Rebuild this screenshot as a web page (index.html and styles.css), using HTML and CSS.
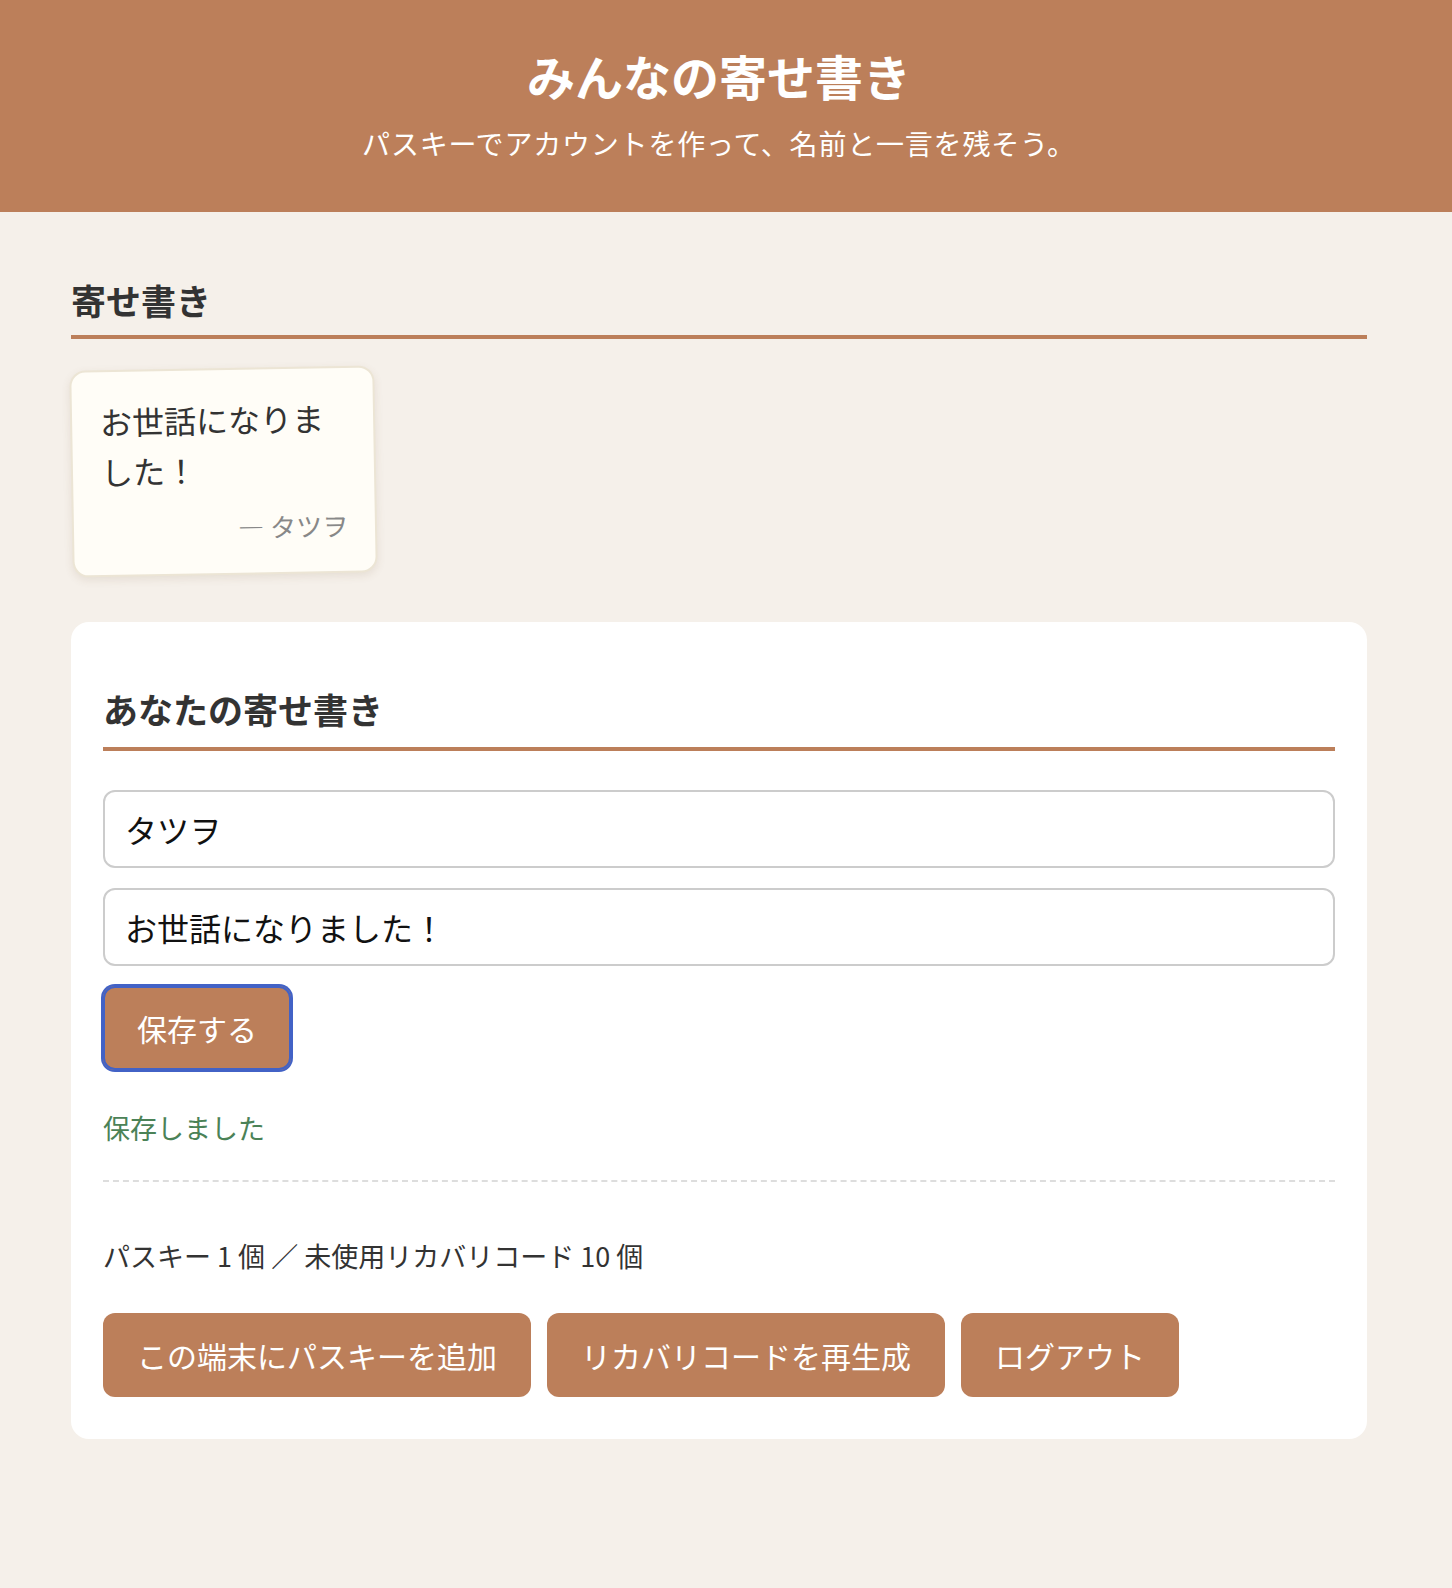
FILE: index.html
```html
<!DOCTYPE html>
<html lang="ja">
<head>
    <meta charset="UTF-8">
    <meta name="viewport" content="width=device-width, initial-scale=1.0">
    <title>みんなの寄せ書き</title>
    <link rel="stylesheet" href="styles.css">
</head>
<body>
    <header class="site-header">
        <h1>みんなの寄せ書き</h1>
        <p>パスキーでアカウントを作って、名前と一言を残そう。</p>
    </header>

    <main class="container">
        <section>
            <h2>寄せ書き</h2>
            <div class="cards">
                <div class="card">
                    <p class="card-msg">お世話になりました！</p>
                    <p class="card-author">— タツヲ</p>
                </div>
            </div>
        </section>

        <section class="panel">
            <h2>あなたの寄せ書き</h2>
            <form class="entry-form" onsubmit="return false;">
                <input type="text" value="タツヲ">
                <input type="text" value="お世話になりました！">
                <button class="btn is-focused" type="submit">保存する</button>
            </form>
            <p class="status-ok">保存しました</p>

            <div class="account">
                <p class="account-info">パスキー 1 個 ／ 未使用リカバリコード 10 個</p>
                <div class="actions">
                    <button class="btn">この端末にパスキーを追加</button>
                    <button class="btn">リカバリコードを再生成</button>
                    <button class="btn">ログアウト</button>
                </div>
            </div>
        </section>
    </main>
</body>
</html>
```

FILE: styles.css
```css
body {
    margin: 0;
    background-color: #f5f0ea;
    color: #333;
    font-family: "Noto Sans CJK JP", "Noto Sans", sans-serif;
}

.site-header {
    background-color: #bc7f5a;
    color: #fff;
    text-align: center;
    padding: 47px 14px 48px 0;
}
.site-header h1 {
    margin: 0;
    font-size: 48px;
    line-height: 1.2;
    font-weight: 700;
}
.site-header p {
    margin: 17px 0 0;
    font-size: 28px;
    line-height: 1.5;
    letter-spacing: 0.8px;
}

.container {
    max-width: 1296px;
    margin: 0 auto;
    padding: 33px 14px 80px 0;
}

h2 {
    margin: 30px 0 29px;
    padding-bottom: 11px;
    font-size: 35px;
    line-height: 1.4;
    font-weight: 700;
    color: #333;
    border-bottom: 4px solid #bc7f5a;
}

.cards {
    display: flex;
    flex-wrap: wrap;
    gap: 24px;
}
.card {
    width: 305px;
    box-sizing: border-box;
    padding: 24px 27px 26px 28px;
    background-color: #fffdf7;
    border: 2px solid #ece5d5;
    border-radius: 16px;
    box-shadow: 0 3px 8px rgba(120, 90, 60, 0.12);
    transform: rotate(-1deg);
}
.card-msg {
    margin: 0;
    font-size: 32px;
    line-height: 50px;
    color: #333;
}
.card-author {
    margin: 13px 0 0;
    text-align: right;
    font-size: 26px;
    line-height: 40px;
    color: #888;
}

.panel {
    margin-top: 47px;
    padding: 32px 32px 42px;
    background-color: #fff;
    border-radius: 18px;
}
.panel h2 {
    padding-bottom: 14px;
    margin-bottom: 39px;
}

.entry-form input {
    display: block;
    width: 100%;
    box-sizing: border-box;
    margin: 0 0 20px;
    padding: 16px 20px;
    font-family: inherit;
    font-size: 32px;
    line-height: 42px;
    color: #111;
    border: 2px solid #ccc;
    border-radius: 12px;
    background: #fff;
}
.entry-form input + input {
    margin-bottom: 20px;
}

.btn {
    height: 84px;
    padding: 0 34px;
    font-family: inherit;
    font-size: 30px;
    line-height: 36px;
    color: #fff;
    background-color: #bc7f5a;
    border: none;
    border-radius: 12px;
    cursor: pointer;
}
.btn.is-focused {
    box-shadow: inset 0 0 0 2px #4262c6, 0 0 0 2px #4262c6;
}

.status-ok {
    margin: 38px 0 0;
    font-size: 27px;
    line-height: 40px;
    color: #4b8257;
}

.account {
    margin-top: 32px;
    border-top: 2px dashed #ddd;
}
.account-info {
    margin: 53px 0 36px;
    font-size: 27px;
    line-height: 42px;
    color: #333;
}
.actions {
    display: flex;
    flex-wrap: wrap;
    gap: 16px;
}
```
